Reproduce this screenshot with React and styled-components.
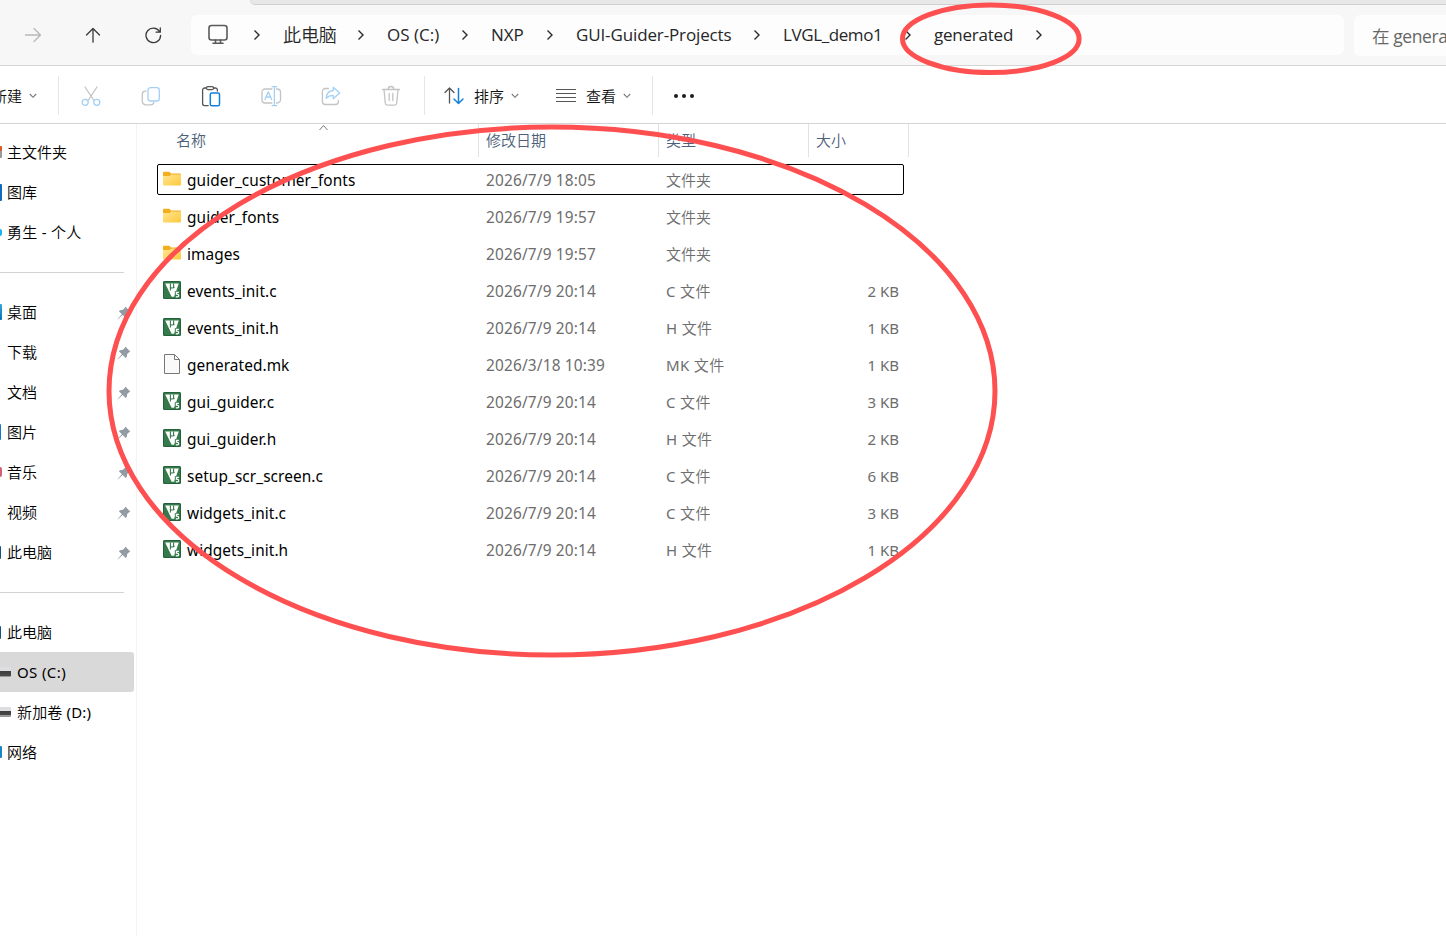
import React from "react";
import styled, { createGlobalStyle } from "styled-components";

const CJK = `"Noto Sans CJK SC DemiLight", "Noto Sans CJK SC", sans-serif`;

const Global = createGlobalStyle`
  *, *::before, *::after { box-sizing: border-box; }
  html, body { margin: 0; background: #fff; overflow: hidden; }
  body {
    font-family: "Noto Sans", ${CJK};
    font-size: 15px;
    color: #000;
  }
`;

const Window = styled.div`
  position: relative;
  display: flex;
  flex-direction: column;
  width: 1446px;
  height: 944px;
  overflow: hidden;
  background: #fff;
`;

const Header = styled.header`
  display: flex;
  flex-direction: column;
  height: 66px;
  background: #f7f7f7;
  border-bottom: 1px solid #d4d4d4;
`;

const TabStrip = styled.div`
  flex: none;
  height: 5px;
  margin-left: 250px;
  background: #e8e8e8;
  border-bottom: 1px solid #d0d0d0;
  border-left: 1px solid #d8d8d8;
  border-bottom-left-radius: 5px;
`;

const NavBar = styled.div`
  display: flex;
  align-items: center;
  height: 60px;
`;

const NavButtons = styled.div`
  display: flex;
  flex: none;
  width: 191px;
  padding-left: 3px;
`;

const NavButton = styled.div`
  display: flex;
  align-items: center;
  justify-content: center;
  width: 60px;
  height: 40px;
  color: ${(p) => (p.$disabled ? "#b9b9b9" : "#3a3a3a")};
`;

const AddressBar = styled.div`
  display: flex;
  align-items: center;
  flex: none;
  width: 1153px;
  height: 40px;
  padding-left: 16px;
  background: #fdfdfd;
  border-radius: 6px;
`;

const RootCrumb = styled.div`
  display: flex;
  align-items: center;
  justify-content: space-between;
  width: 54px;
  color: #5a5a5a;
`;

const Crumb = styled.div`
  display: flex;
  align-items: center;
  justify-content: space-between;
  width: ${(p) => p.$width}px;
  margin-left: 22px;
`;

const CrumbText = styled.span`
  font-family: "Open Sans", ${CJK};
  font-size: ${(p) => p.$size}px;
  line-height: 26px;
  color: #262626;
  white-space: nowrap;
  letter-spacing: ${(p) => p.$track}px;
`;

const SearchBox = styled.div`
  flex: none;
  width: 200px;
  height: 41px;
  margin-left: 10px;
  padding-left: 18px;
  font-family: "Open Sans", ${CJK};
  font-size: 17.5px;
  letter-spacing: -0.4px;
  line-height: 42px;
  white-space: nowrap;
  color: #666;
  background: #fdfdfd;
  border-radius: 6px;
`;

const Toolbar = styled.div`
  display: flex;
  align-items: center;
  flex: none;
  height: 58px;
  border-bottom: 1px solid #d4d4d4;
`;

const ToolDivider = styled.div`
  width: 1px;
  height: 39px;
  margin-top: 2px;
  background: #e6e6e6;
`;

const NewButton = styled.div`
  display: flex;
  align-items: center;
  gap: 7px;
  width: 58px;
  svg { margin-top: 3px; }
`;

const ToolLabel = styled.span`
  line-height: 22px;
  color: #111;
  white-space: nowrap;
  margin-left: ${(p) => p.$shift || 0}px;
  margin-top: 3px;
`;

const IconGroup = styled.div`
  display: flex;
  width: 365px;
  padding-left: 2px;
`;

const ToolIcon = styled.div`
  display: flex;
  align-items: center;
  justify-content: center;
  width: 60px;
  height: 40px;
  margin-top: 3px;
`;

const MenuGroup = styled.div`
  display: flex;
  align-items: center;
  gap: 36px;
  width: 227px;
  padding-left: 18px;
`;

const MenuButton = styled.div`
  display: flex;
  align-items: center;
  gap: 7px;
  svg { flex: none; margin-top: 3px; }
  svg:first-child { margin-right: 2px; }
`;

const MoreButton = styled.div`
  display: flex;
  gap: 4px;
  padding: 3px 0 0 21px;
`;

const Dot = styled.i`
  width: 4px;
  height: 4px;
  border-radius: 50%;
  background: #1c1c1c;
`;

const Body = styled.div`
  display: flex;
  flex: 1;
  min-height: 0;
`;

const Sidebar = styled.nav`
  width: 137px;
  height: 812px;
  padding-top: 8px;
  border-right: 1px solid #f3f3f3;
`;

const SideItem = styled.div`
  display: flex;
  align-items: center;
  width: 134px;
  height: 40px;
  padding-right: 3px;
  border-radius: 0 3px 3px 0;
  background: ${(p) => (p.$selected ? "#d9d9d9" : "transparent")};
`;

const IconSlot = styled.div`
  display: flex;
  align-items: center;
  flex: none;
  width: ${(p) => (p.$nested ? 17 : 7)}px;
`;

const EdgeIcon = styled.i`
  width: ${(p) => p.$w}px;
  height: ${(p) => p.$h}px;
  background: ${(p) => p.$fill};
  border-radius: ${(p) => (p.$round ? "0 8px 8px 0" : "0 1px 1px 0")};
`;

const SideLabel = styled.span`
  flex: 1;
  line-height: 22px;
  white-space: nowrap;
  letter-spacing: ${(p) => p.$track || 0}px;
`;

const SideRule = styled.div`
  display: flex;
  align-items: center;
  width: 124px;
  height: 40px;
  &::after { content: ""; flex: 1; height: 1px; background: #d2d2d2; }
`;

const Files = styled.main`
  flex: 1;
`;

const ColumnHeads = styled.div`
  display: grid;
  grid-template-columns: 342px 180px 150px 100px;
  width: 772px;
  height: 33px;
  margin-bottom: 7px;
`;

const ColumnHead = styled.div`
  display: flex;
  padding-left: ${(p) => (p.$first ? 39 : 7)}px;
  border-right: 1px solid #e2e2e2;
  line-height: 32px;
  color: #4c607a;
`;

const SortMark = styled.svg`
  margin-left: 112px;
`;

const Row = styled.div`
  display: grid;
  grid-template-columns: 328px 180px 150px 83px;
  align-items: center;
  width: 747px;
  height: 31px;
  margin: 0 0 6px 20px;
  border: 1px solid ${(p) => (p.$focused ? "#000" : "transparent")};
  border-radius: 2px;
`;

const NameCell = styled.div`
  display: flex;
  align-items: center;
  padding-left: 5px;
  gap: 6px;
  svg { flex: none; margin-top: -2px; }
`;

const FileName = styled.span`
  padding-top: 2px;
  font-size: 15.4px;
  line-height: 22px;
  letter-spacing: 0.08px;
  white-space: nowrap;
`;

const MetaCell = styled.span`
  line-height: 22px;
  white-space: nowrap;
  color: #6d6d6d;
`;

const DateCell = styled(MetaCell)`
  padding-top: 2px;
  font-size: 15.4px;
  letter-spacing: 0.17px;
`;

const TypeCell = styled(MetaCell)`
  letter-spacing: ${(p) => (p.$latin ? 0.35 : 0)}px;
`;

const SizeCell = styled(MetaCell)`
  text-align: right;
`;

const Markup = styled.svg`
  position: absolute;
  inset: 0;
  pointer-events: none;
`;

const PinMark = styled.svg`
  flex: none;
  margin-top: 1px;
`;

const Chevron = () => (
  <svg width="8" height="12" viewBox="0 0 8 12" fill="none" stroke="#2a2a2a" strokeWidth="1.4">
    <path d="M1.5 1.5 6 6 1.5 10.5" />
  </svg>
);

const Caret = () => (
  <svg width="8" height="6" viewBox="0 0 8 6" fill="none" stroke="#777" strokeWidth="1.1">
    <path d="M.8 1 4 4.3 7.2 1" />
  </svg>
);

const Glyph = ({ size = 22, children, ...rest }) => (
  <svg
    width={size}
    height={size}
    viewBox={`0 0 ${size} ${size}`}
    fill="none"
    strokeWidth="1.3"
    strokeLinecap="round"
    strokeLinejoin="round"
    {...rest}
  >
    {children}
  </svg>
);

const GREY = "#c3c3c3";
const PALE = "#a3d0f5";
const BLUE = "#1380dc";

const Cut = () => (
  <Glyph>
    <path d="M5 2 13.6 15M17 2 8.4 15" stroke={GREY} />
    <circle cx="5.2" cy="17.3" r="3" stroke={PALE} />
    <circle cx="16.8" cy="17.3" r="3" stroke={PALE} />
  </Glyph>
);

const Copy = () => (
  <Glyph>
    <path d="M6 6.2H5.2A3 3 0 0 0 2.3 9.2v7.2a3.4 3.4 0 0 0 3.4 3.4h5.2a3 3 0 0 0 2.9-2.4" stroke={GREY} />
    <rect x="8" y="2.6" width="11.3" height="13.4" rx="2.6" stroke={PALE} />
  </Glyph>
);

const Paste = () => (
  <Glyph>
    <path d="M6.4 3H4.6a2 2 0 0 0-2 2v13.6a2 2 0 0 0 2 2h3.6M13.6 3h1.8a2 2 0 0 1 2 2v1" stroke="#555" />
    <rect x="6.4" y="1.6" width="7.2" height="3" rx="1.5" stroke="#555" />
    <rect x="10.3" y="8" width="9.2" height="12.8" rx="1.6" stroke={BLUE} strokeWidth="1.5" />
  </Glyph>
);

const Rename = () => (
  <Glyph>
    <path d="M12 4H5a3 3 0 0 0-3 3v8a3 3 0 0 0 3 3h7M16.5 4h.7a3.3 3.3 0 0 1 3.3 3.3v7.4a3.3 3.3 0 0 1-3.3 3.3h-.7" stroke={GREY} />
    <path d="M5 14.5 8.3 6.8 11.6 14.5M6 12h4.6M12 1.6h4.8M12 20.6h4.8M14.4 1.6v19" stroke={PALE} />
  </Glyph>
);

const Share = () => (
  <Glyph>
    <path d="M8.5 3.5H5.4a3 3 0 0 0-3 3v10a3 3 0 0 0 3 3h10a3 3 0 0 0 3-3v-1.2" stroke={GREY} />
    <path d="M13.2 2.3 19.7 8l-6.5 5.7v-3.3c-3 0-5 .7-7 3 .3-4.3 2.7-7.6 7-7.9z" stroke={PALE} />
  </Glyph>
);

const Trash = () => (
  <Glyph>
    <path d="M2.5 4.5h17M4 4.5l1.3 13.8a2 2 0 0 0 2 1.8h7.4a2 2 0 0 0 2-1.8L18 4.5M8.2 4.3a2.8 2.8 0 0 1 5.6 0M9.2 8.5v7M12.8 8.5v7" stroke={GREY} />
  </Glyph>
);

const Folder = () => (
  <svg width="18" height="16" viewBox="0 0 18 16">
    <defs>
      <linearGradient id="fold" x1="0" y1="0" x2="1" y2="1">
        <stop offset="0" stopColor="#ffe594" />
        <stop offset="1" stopColor="#fdc93a" />
      </linearGradient>
    </defs>
    <path d="M0 1.700a1 1 0 0 1 1-1h5.300L8 2.500h9a1 1 0 0 1 1 1v4H0z" fill="#f2ae1c" />
    <path d="M0 4.900h6.600L8.200 3.500H17.500a.5.5 0 0 1 .5.5v9.500a1 1 0 0 1-1 1H1a1 1 0 0 1-1-1z" fill="url(#fold)" />
  </svg>
);

const KeilFile = () => (
  <svg width="18" height="18" viewBox="0 0 18 18">
    <rect width="18" height="18" rx="1.5" fill="#347a4a" />
    <rect x=".5" y=".5" width="17" height="17" rx="1.2" fill="none" stroke="#24613a" />
    <path d="M2.2 2.4h13.6L11.2 15.8H8.6z" fill="#fff" />
    <path d="M7.4 2.4v7M7.4 6.3c.5 1 2.7 1 3.2-.2V2.4M10.7 6.1l.6 1" stroke="#347a4a" strokeWidth="1.1" fill="none" />
    <path d="M11.8 10.2h5v6.6h-5z" fill="#347a4a" />
    <path d="M15.9 11.3h-2.5v1.9c2.7-.4 3.1 2.5.9 2.6-.6 0-1-.1-1.4-.4" stroke="#fff" strokeWidth="1.2" fill="none" />
  </svg>
);

const PlainFile = () => (
  <svg width="18" height="20" viewBox="0 0 18 20" fill="#fafafa" stroke="#777">
    <path d="M1.5.5h10l5 5v14h-15z" />
    <path d="M11.5.5v5h5" fill="none" />
  </svg>
);

const Pin = () => (
  <PinMark width="14" height="14" viewBox="0 0 14 14" fill="#929ba3">
    <path d="M8.3.6 13.4 5.7 12 6.2 10.2 8.1 9.7 11 8.7 12 5.7 9.1.8 13.3.6 13.1 4.9 8.2 1.9 5.3 2.9 4.3 5.9 3.8 7.8 2z" />
  </PinMark>
);

const icons = { folder: Folder, keil: KeilFile, plain: PlainFile };

const crumbs = [
  { text: "此电脑", width: 82, track: -0.1, size: 18 },
  { text: "OS (C:)", width: 82, track: 0, size: 17 },
  { text: "NXP", width: 63, track: 0, size: 17 },
  { text: "GUI-Guider-Projects", width: 185, track: -0.13, size: 17 },
  { text: "LVGL_demo1", width: 129, track: -0.4, size: 17 },
  { text: "generated", width: 109, track: -0.23, size: 17 },
];

const quick = [
  { t: "主文件夹", w: 2, h: 12, f: "linear-gradient(#e0592b 40%, #999 40%)" },
  { t: "图库", w: 2, h: 17, f: "#0f6cbd" },
  { t: "勇生 - 个人", w: 2, h: 7, f: "#19b4f0", round: true, track: 0.25 },
];

const pinned = [
  { t: "桌面", w: 2, h: 16, f: "linear-gradient(#31a8dc, #0872b8)" },
  { t: "下载" },
  { t: "文档" },
  { t: "图片", w: 1, h: 16, f: "#1477c9" },
  { t: "音乐", w: 2, h: 10, f: "#cf6078", round: true },
  { t: "视频" },
  { t: "此电脑", w: 1, h: 13, f: "#11557c" },
];

const DRIVE = "linear-gradient(#dcdee0 40%, #3d3d3d 40%, #4a4a4a 85%, #999 85%)";

const places = [
  { t: "此电脑", w: 1, h: 13, f: "#11557c" },
  { t: "OS (C:)", w: 11, h: 10, f: DRIVE, nested: true, selected: true, track: 0.38 },
  { t: "新加卷 (D:)", w: 11, h: 10, f: DRIVE, nested: true, track: 0.17 },
  { t: "网络", w: 2, h: 12, f: "#1887c4" },
];

const files = [
  ["folder", "guider_customer_fonts", "2026/7/9 18:05", "文件夹", ""],
  ["folder", "guider_fonts", "2026/7/9 19:57", "文件夹", ""],
  ["folder", "images", "2026/7/9 19:57", "文件夹", ""],
  ["keil", "events_init.c", "2026/7/9 20:14", "C 文件", "2 KB"],
  ["keil", "events_init.h", "2026/7/9 20:14", "H 文件", "1 KB"],
  ["plain", "generated.mk", "2026/3/18 10:39", "MK 文件", "1 KB"],
  ["keil", "gui_guider.c", "2026/7/9 20:14", "C 文件", "3 KB"],
  ["keil", "gui_guider.h", "2026/7/9 20:14", "H 文件", "2 KB"],
  ["keil", "setup_scr_screen.c", "2026/7/9 20:14", "C 文件", "6 KB"],
  ["keil", "widgets_init.c", "2026/7/9 20:14", "C 文件", "3 KB"],
  ["keil", "widgets_init.h", "2026/7/9 20:14", "H 文件", "1 KB"],
];

const SideEntry = ({ item, hasPin }) => (
  <SideItem $selected={item.selected}>
    <IconSlot $nested={item.nested}>
      {item.w && <EdgeIcon $w={item.w} $h={item.h} $fill={item.f} $round={item.round} />}
    </IconSlot>
    <SideLabel $track={item.track}>{item.t}</SideLabel>
    {hasPin && <Pin />}
  </SideItem>
);

export default function App() {
  return (
    <Window>
      <Global />
      <Header>
        <TabStrip />
        <NavBar>
          <NavButtons>
            <NavButton $disabled>
              <Glyph size={18} stroke="currentColor"><path d="M1.5 9h15M10 2.5 16.5 9 10 15.5" /></Glyph>
            </NavButton>
            <NavButton>
              <Glyph size={18} stroke="currentColor"><path d="M9 16.2V2.5M2.5 9 9 2.5l6.5 6.5" /></Glyph>
            </NavButton>
            <NavButton>
              <Glyph size={18} stroke="currentColor"><path d="M15.5 5.5A7.3 7.3 0 1 0 16.6 9.5M16.3 2v4.2h-4.2" /></Glyph>
            </NavButton>
          </NavButtons>
          <AddressBar>
            <RootCrumb>
              <Glyph stroke="currentColor" strokeWidth="1.6">
                <rect x="2" y="1.5" width="18" height="14.5" rx="2.5" />
                <path d="M8.5 16v3M13.5 16v3M6 19.3h10" />
              </Glyph>
              <Chevron />
            </RootCrumb>
            {crumbs.map((c) => (
              <Crumb key={c.text} $width={c.width}>
                <CrumbText $track={c.track} $size={c.size}>{c.text}</CrumbText>
                <Chevron />
              </Crumb>
            ))}
          </AddressBar>
          <SearchBox>在 generated 中搜索</SearchBox>
        </NavBar>
      </Header>
      <Toolbar>
        <NewButton>
          <ToolLabel $shift={-8}>新建</ToolLabel>
          <Caret />
        </NewButton>
        <ToolDivider />
        <IconGroup>
          {[Cut, Copy, Paste, Rename, Share, Trash].map((Icon, i) => (
            <ToolIcon key={i}><Icon /></ToolIcon>
          ))}
        </IconGroup>
        <ToolDivider />
        <MenuGroup>
          <MenuButton>
            <Glyph stroke="#555">
              <path d="M6.5 18V3M2 7.5 6.5 3l4.5 4.5" />
              <path d="M15.5 3.5v15M11 14l4.5 4.5L20 14" stroke={BLUE} strokeWidth="1.5" />
            </Glyph>
            <ToolLabel>排序</ToolLabel>
            <Caret />
          </MenuButton>
          <MenuButton>
            <Glyph stroke="#555" strokeLinecap="butt" strokeWidth="1">
              <path d="M1 4.5h20M1 8.5h20M1 12.5h20M1 16.5h20" />
            </Glyph>
            <ToolLabel>查看</ToolLabel>
            <Caret />
          </MenuButton>
        </MenuGroup>
        <ToolDivider />
        <MoreButton><Dot /><Dot /><Dot /></MoreButton>
      </Toolbar>
      <Body>
        <Sidebar>
          {quick.map((i) => <SideEntry key={i.t} item={i} />)}
          <SideRule />
          {pinned.map((i) => <SideEntry key={i.t} item={i} hasPin />)}
          <SideRule />
          {places.map((i) => <SideEntry key={i.t} item={i} />)}
        </Sidebar>
        <Files>
          <ColumnHeads>
            <ColumnHead $first>
              名称
              <SortMark width="11" height="8" viewBox="0 0 11 8" fill="none" stroke="#777">
                <path d="M1.5 6 5.5 1.5l4 4.5" />
              </SortMark>
            </ColumnHead>
            <ColumnHead>修改日期</ColumnHead>
            <ColumnHead>类型</ColumnHead>
            <ColumnHead>大小</ColumnHead>
          </ColumnHeads>
          {files.map(([kind, name, date, type, size], i) => {
            const Icon = icons[kind];
            return (
              <Row key={name} $focused={i === 0}>
                <NameCell><Icon /><FileName>{name}</FileName></NameCell>
                <DateCell>{date}</DateCell>
                <TypeCell $latin={kind !== "folder"}>{type}</TypeCell>
                <SizeCell>{size}</SizeCell>
              </Row>
            );
          })}
        </Files>
      </Body>
      <Markup width="1446" height="944" fill="none" stroke="#fe5050" strokeWidth="5">
        <ellipse cx="552" cy="391" rx="443" ry="264" />
        <ellipse cx="990.8" cy="38.7" rx="88.3" ry="33.8" />
      </Markup>
    </Window>
  );
}
